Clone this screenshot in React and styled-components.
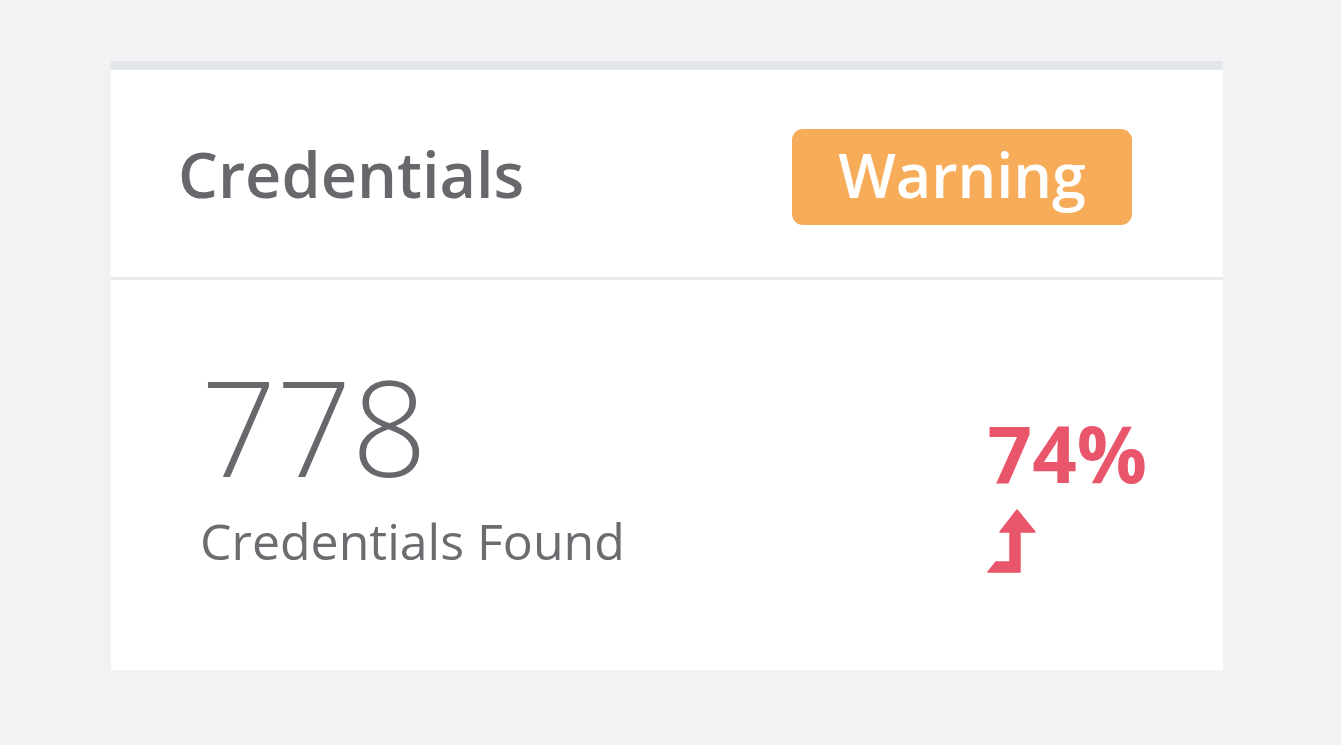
import React from 'react';
import styled, { createGlobalStyle } from 'styled-components';

const GlobalStyle = createGlobalStyle`
  html, body {
    margin: 0;
    padding: 0;
    background: #f2f2f4;
    font-family: "Open Sans", "Liberation Sans", sans-serif;
  }
`;

const Page = styled.div`
  padding: 61px 118px 75px 111px;
`;

const Card = styled.div`
  width: 1112px;
  background: #ffffff;
  border-top: 9px solid #e4e7ea;
`;

const Header = styled.div`
  display: flex;
  align-items: center;
  justify-content: space-between;
  padding: 0 91px 0 67px;
  border-bottom: 3px solid #e9eaec;
  box-sizing: border-box;
  height: 210px;
`;

const Title = styled.h2`
  margin: 0;
  font-size: 63px;
  font-weight: 600;
  color: #66686b;
  line-height: 1;
`;

const Badge = styled.span`
  display: inline-flex;
  align-items: center;
  justify-content: center;
  width: 340px;
  height: 96px;
  padding-bottom: 4px;
  box-sizing: border-box;
  border-radius: 11px;
  background: ${p => p.$color};
  color: #ffffff;
  font-size: 61px;
  font-weight: 600;
  line-height: 1;
  margin-top: 6px;
`;

const Body = styled.div`
  height: 390px;
  display: flex;
  justify-content: space-between;
  padding: 0 76px 0 90px;
  box-sizing: border-box;
`;

const Stat = styled.div`
  display: flex;
  flex-direction: column;
  padding-top: 80px;
`;

const Count = styled.div`
  font-size: 132px;
  font-weight: 300;
  color: #66686b;
  line-height: 1;
`;

const Caption = styled.div`
  font-size: 50px;
  font-weight: 400;
  color: #6a6c6f;
  line-height: 1;
  margin-top: 24px;
  margin-left: -1px;
`;

const Trend = styled.div`
  display: flex;
  flex-direction: column;
  padding-top: 134px;
`;

const Percent = styled.div`
  font-size: 78px;
  font-weight: 700;
  color: ${p => p.$color};
  line-height: 1;
`;

const ArrowIcon = styled.svg`
  display: block;
  margin-top: 13px;
  margin-left: -3px;
`;

const TurnUpArrow = ({ color }) => (
  <ArrowIcon width="56" height="72" viewBox="0 0 56 72">
    <path
      d="M32 5 L50 27 L35 27 L35 67 L3 67 L11 57 L25 57 L25 27 L15 27 Z"
      fill={color}
      stroke={color}
      strokeWidth="1.5"
      strokeLinejoin="round"
    />
  </ArrowIcon>
);

const App = () => {
  const red = '#e9566b';

  return (
    <>
      <GlobalStyle />
      <Page>
        <Card>
          <Header>
            <Title>Credentials</Title>
            <Badge $color="#f7ac59">Warning</Badge>
          </Header>
          <Body>
            <Stat>
              <Count>778</Count>
              <Caption>Credentials Found</Caption>
            </Stat>
            <Trend>
              <Percent $color={red}>74%</Percent>
              <TurnUpArrow color={red} />
            </Trend>
          </Body>
        </Card>
      </Page>
    </>
  );
};

export default App;
